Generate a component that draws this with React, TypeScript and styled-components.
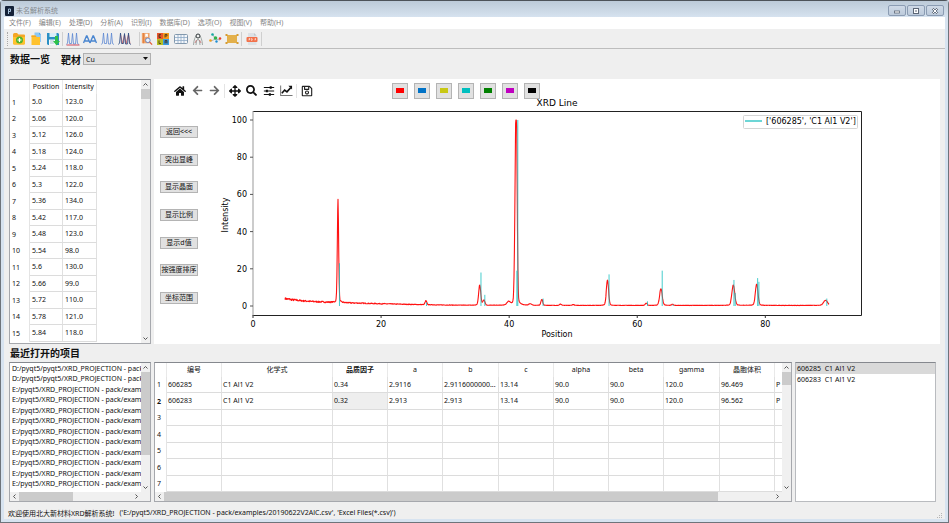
import React from 'react';
import styled, { createGlobalStyle, css } from 'styled-components';
import { FaHome, FaArrowLeft, FaArrowRight, FaArrowsAlt, FaSearch, FaRegSave } from 'react-icons/fa';

const UI_FONT = '"Noto Sans", "Noto Sans CJK SC", sans-serif';
const PLOT_FONT = '"DejaVu Sans", sans-serif';

const GlobalStyle = createGlobalStyle`
  *, *::before, *::after { box-sizing: border-box; }
  body { margin: 0; background: #d7e3f0; font-family: ${UI_FONT}; font-size: 7px; color: #111; }
  button, select { font: inherit; color: inherit; padding: 0; }
  ul { list-style: none; margin: 0; padding: 0; }
`;

const Window = styled.div`
  display: flex;
  flex-direction: column;
  min-height: 100vh;
  padding: 0 3px 3px;
  border: 1px solid #6e747b;
  border-top-color: #4d5359;
  border-radius: 4px 4px 0 0;
  background: #d7e3f0;
`;

const TitleBar = styled.header`
  display: flex;
  align-items: center;
  gap: 2px;
  height: 16px;
  margin: 0 -3px;
  padding: 3px 4px 0;
  background: linear-gradient(#bccad8, #d6e2ef);
  color: #868b90;
`;

const AppTitle = styled.h1`
  flex: 1;
  margin: 0;
  font-size: 7px;
  line-height: 10px;
  font-weight: 400;
`;

const WindowButton = styled.button`
  display: grid;
  place-items: center;
  width: 18px;
  height: 11px;
  border: 1px solid #8b9cb3;
  border-radius: 2px;
  background: linear-gradient(#cfdae7, #bccadb);
`;

const WindowButtons = styled.div`
  display: flex;
  gap: 1px;
`;

const MenuBar = styled.nav`
  display: flex;
  gap: 8px;
  height: 12px;
  padding: 0 5px;
  background: #fff;
`;

const MenuItem = styled.button`
  border: 0;
  background: none;
  color: #858585;
  line-height: 12px;
  white-space: nowrap;
`;

const Client = styled.div`
  flex: 1;
  display: flex;
  flex-direction: column;
  background: #efefef;
`;

const ToolBar = styled.div`
  display: flex;
  align-items: center;
  height: 20px;
  padding-left: 3px;
  border-bottom: 1px solid #bdbdbd;
`;

const Grip = styled.span`
  width: 2px;
  height: 14px;
  margin-right: 1px;
  border-left: 1px dotted #a9a9a9;
`;

const ToolGroup = styled.div`
  display: flex;
  padding-right: 5px;
`;

const ToolButton = styled.button<{ $w?: number }>`
  display: grid;
  place-items: center;
  width: ${p => p.$w ?? 17}px;
  height: 16px;
  border: 0;
  background: none;
  svg { display: block; }
`;

const Separator = styled.span<{ $light?: boolean }>`
  width: 1px;
  height: 14px;
  margin: 0 1px;
  background: ${p => (p.$light ? '#e4e4e4' : '#cfcfcf')};
`;

const HeadingRow = styled.div`
  display: flex;
  align-items: center;
  height: 30px;
  padding: 0 6px 10px;
`;

const Heading = styled.h2`
  margin: 0;
  font-size: 10px;
  line-height: 17px;
  font-weight: 700;
  color: #111;
`;

const TargetLabel = styled.label`
  margin-left: 11px;
  font-size: 10px;
  font-weight: 700;
`;

const SelectBox = styled.span`
  display: flex;
  position: relative;
  width: 68px;
  height: 12px;
  margin-left: 2px;
  svg { position: absolute; right: 3px; top: 4px; pointer-events: none; }
`;

const Select = styled.select`
  appearance: none;
  width: 100%;
  padding-left: 2px;
  border: 1px solid #b0b0b0;
  border-radius: 0;
  background: #e1e1e1;
`;

const Upper = styled.main`
  flex: 1;
  display: grid;
  grid-template-columns: 142px 1fr;
  gap: 3px;
  padding: 0 5px;
`;

const Lower = styled.section`
  display: grid;
  grid-template-columns: 142px 1fr 141px;
  gap: 3px;
  height: 140px;
  padding: 0 9px 0 5px;
`;

const Panel = styled.div`
  display: grid;
  grid-template-columns: minmax(0, 1fr) 9px;
  grid-template-rows: minmax(0, 1fr) auto;
  min-width: 0;
  min-height: 0;
  border: 1px solid #a6a8ad;
  border-top-color: #85888e;
  background: #fff;
`;

const Clip = styled.div`
  overflow: hidden;
`;

const Track = styled.div<{ $horizontal?: boolean }>`
  display: flex;
  flex-direction: ${p => (p.$horizontal ? 'row' : 'column')};
  background: #f0f0f0;
  ${p => (p.$horizontal ? css`height: 9px;` : css`width: 9px;`)}
`;

const Arrow = styled.button<{ $turn: number }>`
  display: grid;
  place-items: center;
  flex: none;
  width: 9px;
  height: 9px;
  border: 0;
  background: none;
  svg { transform: rotate(${p => p.$turn}deg); }
`;

const TrackBody = styled.div<{ $horizontal?: boolean }>`
  flex: 1;
  display: flex;
  flex-direction: ${p => (p.$horizontal ? 'row' : 'column')};
`;

const Thumb = styled.span<{ $share: number }>`
  flex: 0 0 ${p => p.$share}%;
  background: #cbcbcb;
`;

const Corner = styled.span`
  background: #f0f0f0;
`;

const Grid = styled.table`
  table-layout: fixed;
  border-collapse: separate;
  border-spacing: 0;
  th, td {
    height: 16px;
    padding: 0 0 0 2px;
    overflow: hidden;
    border-right: 1px solid #e0e0e0;
    line-height: 10px;
    font-weight: 400;
    text-align: left;
    white-space: nowrap;
    text-overflow: ellipsis;
  }
  td { padding-left: 1px; border-bottom: 1px solid #dcdcdc; }
  thead th { height: 14px; padding: 0; text-align: center; border-right-color: #e9e9e9; }
  tbody th { border-right-color: #e4e4e4; }
`;

const DataGrid = styled(Grid)`
  width: 87px;
  td { padding-left: 2px; }
  tbody tr:nth-child(odd) > * { height: 17px; }
`;

const ResultGrid = styled(Grid)`
  width: 676px;
  tbody tr:nth-child(even) > * { height: 17px; }
`;

const HeadCell = styled.th<{ $strong?: boolean }>`
  && { font-weight: ${p => (p.$strong ? 700 : 400)}; }
`;

const Cell = styled.td<{ $selected?: boolean }>`
  background: ${p => (p.$selected ? '#eeeeee' : 'transparent')};
`;

const FileList = styled.ul`
  padding: 1px 0 0 2px;
  li { height: 10px; line-height: 10px; white-space: nowrap; }
  li:nth-child(even) { height: 11px; }
`;

const MatchList = styled.ul`
  border: 1px solid #b9bbbf;
  border-top-color: #85888e;
  background: #fff;
`;

const MatchItem = styled.li<{ $selected?: boolean }>`
  height: 11px;
  padding-left: 1px;
  line-height: 11px;
  white-space: pre;
  background: ${p => (p.$selected ? '#d9d9d9' : 'transparent')};
`;

const PlotPanel = styled.section`
  display: grid;
  grid-template-columns: 60px minmax(0, 1fr);
  grid-template-rows: 19px 1fr;
  background: #fff;
`;

const PlotTools = styled.div`
  grid-column: 1 / -1;
  display: flex;
  align-items: center;
  padding: 4px 0 0 17px;
  svg { display: block; }
`;

const Swatches = styled.div`
  display: flex;
  gap: 6px;
  margin-left: 77px;
`;

const Swatch = styled.button<{ $color: string }>`
  width: 16px;
  height: 16px;
  padding: 4px 3px;
  border: 1px solid #b4b4b4;
  background: #e1e1e1;
  &::before { content: ''; display: block; height: 5px; background: ${p => p.$color}; }
`;

const SideButtons = styled.div`
  display: flex;
  flex-direction: column;
  justify-content: space-between;
  align-items: flex-start;
  max-height: 206px;
  padding: 28px 0 0 6px;
`;

const SideButton = styled.button`
  width: 38px;
  height: 12px;
  border: 1px solid #b4b4b4;
  background: #e1e1e1;
  line-height: 10px;
  white-space: nowrap;
`;

const Chart = styled.svg`
  display: block;
  width: 100%;
  height: auto;
  font-family: ${PLOT_FONT};
`;

const SectionTitle = styled.div`
  padding: 1px 6px 0;
  height: 18px;
`;

const StatusBar = styled.footer`
  display: flex;
  align-items: center;
  gap: 5px;
  height: 17px;
  padding: 4px 2px 0 4px;
  white-space: nowrap;
  svg { margin-left: auto; align-self: flex-end; }
`;

const Chevron = () => (
  <svg width="5" height="5" viewBox="0 0 5 5"><path d="M0.5 3.5 2.5 1.5 4.5 3.5" fill="none" stroke="#555" /></svg>
);

function VScroll({ share }: { share: number }) {
  return (
    <Track>
      <Arrow $turn={0} aria-label="Scroll up"><Chevron /></Arrow>
      <TrackBody><Thumb $share={share} /></TrackBody>
      <Arrow $turn={180} aria-label="Scroll down"><Chevron /></Arrow>
    </Track>
  );
}

function HScroll({ share }: { share: number }) {
  return (
    <Track $horizontal>
      <Arrow $turn={-90} aria-label="Scroll left"><Chevron /></Arrow>
      <TrackBody $horizontal><Thumb $share={share} /></TrackBody>
      <Arrow $turn={90} aria-label="Scroll right"><Chevron /></Arrow>
    </Track>
  );
}

const Icon = ({ children, size = 14 }: { children: React.ReactNode; size?: number }) => (
  <svg width={size} height={size} viewBox="0 0 14 14" fill="none">{children}</svg>
);

const FolderAdd = () => (
  <Icon>
    <path d="M1 2.5Q1 1 2.5 1H5l1.5 1.5H12q1 0 1 1V11q0 1.5-1.5 1.5h-9Q1 12.5 1 11z" fill="#f5a623" />
    <path d="M1 5h12v6q0 1.5-1.5 1.5h-9Q1 12.5 1 11z" fill="#ffc22e" />
    <circle cx="7.5" cy="8" r="3.5" fill="#52b52c" />
    <path d="M7.5 6v4M5.5 8h4" stroke="#fff" strokeWidth="1.2" />
  </Icon>
);
const FolderDoc = () => (
  <Icon>
    <path d="M5.5.5h4.500l2 2V10H5.500z" fill="#8cc8f5" />
    <path d="M10 .5v2h2z" fill="#4a9fe0" />
    <path d="M2.500 3.500h4L7.500 5H11v8H2.500z" fill="#ffc22e" />
    <path d="M2.500 3.500h4L7.500 5h-5z" fill="#f5a623" />
  </Icon>
);
const SaveAs = () => (
  <Icon>
    <path d="M1 1h11l1 1v11H2l-1-1z" fill="#2a8fc4" />
    <path d="M3.5 1h7v4h-7z" fill="#d9eef8" />
    <path d="M3 7.5h8V13H3z" fill="#f4fafc" />
    <path d="M4 9h4M4 11h4" stroke="#9bb9c6" strokeWidth=".8" />
    <path d="M9 4h3v5h2l-3.5 4.5L7 9h2z" fill="#2fc14a" />
  </Icon>
);
const Peaks = ({ base, second, color = '#5b86d2' }: { base?: string; second?: string; color?: string }) => (
  <Icon>
    {second && <path d="M2.500 2 4.500 12 6.500 2.500 8 12l2.500-9.500L12 12" stroke={second} strokeWidth=".7" />}
    <path d="M.5 12.500 1.500 11 2.500 1l1 10.500h2L6.500 1.500l1 10.500h2L10.500 1l1 10.500 1.500 1" stroke={color} strokeWidth=".8" />
    {base && <path d="M.5 13h13" stroke={base} strokeWidth="1" />}
  </Icon>
);
const DoubleA = () => (
  <Icon>
    <path d="M.5 11 3.500 4h.5L7 11M2 9h4M7 11l3-7h.5l3 7M8.500 9h4" stroke="#4a86d0" strokeWidth="1.400" />
  </Icon>
);
const BookSearch = () => (
  <Icon size={12}>
    <path d="M1 0h9v12H1z" fill="#f0a368" />
    <path d="M3 0v12" stroke="#e27b3c" />
    <path d="M5 1h3v4L6.500 4 5 5z" fill="#fff" />
    <circle cx="8" cy="8.500" r="2.700" fill="#e8f1fb" stroke="#5e7fc0" />
    <path d="m10 10.500 3 3" stroke="#e45b3a" strokeWidth="1.400" />
  </Icon>
);
const Elements = () => (
  <Icon>
    <path d="M1 1h6v6H1z" fill="#e8552d" /><path d="M7 1h6v6H7z" fill="#f39a1f" />
    <path d="M1 7h6v6H1z" fill="#b5bf24" /><path d="M7 7h6v6H7z" fill="#3b9be0" />
    <path d="M3 2.5v3h2M3 2.5h2M3 4h1.5M9 5.5v-3h2v1.5H9M3 8.5v3h2M9 11.5v-3h2v3M9 10h2" stroke="#42321c" strokeWidth=".8" />
  </Icon>
);
const TableIcon = () => (
  <Icon>
    <rect x=".5" y="2.500" width="13" height="9" rx="1" fill="#f5f7fa" stroke="#8298ad" />
    <path d="M1 5.500h12M1 8.500h12M4 3v8M7 3v8M10 3v8" stroke="#8ea9c6" strokeWidth=".8" />
  </Icon>
);
const Atom = () => (
  <Icon>
    <path d="M2.500 13q.5-8 4-10.500M11.500 13q-.5-8-4-10.500M5 13q0-5 2-6 2 1 2 6" stroke="#8b9692" strokeWidth=".8" />
    <circle cx="7" cy="4" r="2" stroke="#30383a" fill="#f1f1f1" />
    <path d="M5.500 8 4 11M8.500 8l1.500 3" stroke="#c26f6f" strokeWidth=".8" />
  </Icon>
);
const Molecule = () => (
  <Icon>
    <path d="m5 3 2.500 4L3 9M7.500 7l4.500 1" stroke="#aab2bb" />
    <circle cx="4.500" cy="2.500" r="1.300" fill="#13a8a0" /><circle cx="7.500" cy="6" r="1.800" fill="#32b34a" />
    <circle cx="12" cy="6.500" r="1.300" fill="#e8402c" /><circle cx="2.500" cy="8.500" r="1.300" fill="#f0a01c" />
    <circle cx="8.500" cy="9.500" r="1.200" fill="#1f8ed2" />
  </Icon>
);
const Ratio = () => (
  <Icon>
    <path d="M2 3h10v8H2z" fill="#e3b04b" />
    <path d="M.5 2h2v2h-2zM11.500 2h2v2h-2zM.5 10h2v2h-2zM11.500 10h2v2h-2z" fill="#d69c33" />
  </Icon>
);
const PdfIcon = () => (
  <Icon>
    <path d="M3 1h6l2.500 2.500V13H3z" fill="#dde1e5" /><path d="M9 1v2.500h2.500z" fill="#bfc6cc" />
    <rect x="1.500" y="5" width="11" height="5" rx="1" fill="#f2714a" />
    <path d="M4 8.500V6.500h1v1H4M6.500 6.500h.5l.5 1-.5 1h-.5zM10 8.500v-2h1M10 7.500h1" stroke="#fff" strokeWidth=".5" />
  </Icon>
);
const Sliders = () => (
  <Icon size={12}>
    <path d="M1 3h12M1 7h12M1 11h12" stroke="#111" strokeWidth="1.200" />
    <path d="M9 1.500v3M4.500 5.500v3M8 9.500v3" stroke="#111" strokeWidth="2.400" />
  </Icon>
);
const LineChart = () => (
  <Icon size={13}>
    <path d="M.7 1.500v11h12.800" stroke="#777" strokeWidth="1.100" />
    <path d="m2 10 3-3.500 2.500 2 4-4.500" stroke="#111" strokeWidth="1.800" />
    <path d="M9 2h4v4z" fill="#111" />
  </Icon>
);

const sx = (v: number) => 39 + v * 6.404;
const sy = (v: number) => 208 - v * 1.86;

const PEAKS: [number, number, number][] = [
  [13.27, 56, 0.1], [27, 2.2, 0.13], [35.4, 11, 0.16], [36.05, 2.8, 0.16], [39.9, 1.8, 0.25],
  [41.02, 70, 0.14], [41.15, 60, 0.12], [43.3, 0.8, 0.2], [45.1, 3.2, 0.14], [48, 0.7, 0.15], [50, 0.5, 0.15],
  [55.35, 13.6, 0.17], [61.4, 1.2, 0.15], [63.7, 9, 0.2], [65.5, 0.6, 0.15], [75, 11, 0.22], [78.65, 11.5, 0.2],
  [89.4, 2.8, 0.3],
];

const REFERENCE: [number, number][] = [
  [13.5, 23], [27.1, 2], [35.6, 18], [36.2, 6], [41.2, 19], [41.35, 100], [45.3, 4], [55.6, 17],
  [61.6, 2.5], [63.9, 19], [65.6, 0.8], [75.1, 14], [75.3, 7], [78.8, 15], [79, 13], [89.6, 4],
];

function tracePath() {
  let seed = 7;
  const points: string[] = [];
  for (let x = 5; x <= 90; x += 0.06) {
    seed = (seed * 16807) % 2147483647;
    const noise = seed / 2147483647 - 0.5;
    const level = 0.3 + 2.1 * Math.exp(-(x - 5) / 3.5) + 1.6 * Math.exp(-Math.pow(x / 24, 3));
    let y = level + noise * (0.15 + 0.6 * Math.max(0, level - 0.3) / 2);
    for (const [c, h, w] of PEAKS) {
      const d = (x - c) / w;
      y += h * (0.95 * Math.exp((-d * d) / 2) + 0.05 / (1 + (d * d) / 6));
    }
    points.push(`${sx(x).toFixed(1)} ${sy(Math.min(100, y)).toFixed(1)}`);
  }
  return 'M' + points.join('L');
}

const TRACE = tracePath();

function XrdChart() {
  return (
    <Chart viewBox="0 0 726 246" role="img" aria-label="XRD Line">
      <text x="343" y="8" fontSize="9" textAnchor="middle">XRD Line</text>
      <path d={TRACE} fill="none" stroke="#f11" strokeWidth="1.100" strokeLinejoin="round" />
      {REFERENCE.map(([x, h]) => (
        <path key={x} d={`M${sx(x)} 208V${sy(h)}`} stroke="#16bfbf" strokeWidth="0.800" />
      ))}
      <path d="M39 13.5H647.5V217.5H39" fill="none" stroke="#222" />
      <path d="M39 13V218" stroke="#999" />
      {[0, 20, 40, 60, 80].map(v => (
        <g key={v}>
          <path d={`M${sx(v)} 217v3`} stroke="#333" />
          <text x={sx(v)} y="229" fontSize="8" textAnchor="middle">{v}</text>
        </g>
      ))}
      {[0, 20, 40, 60, 80, 100].map(v => (
        <g key={v}>
          <path d={`M36 ${sy(v)}h3`} stroke="#555" />
          <text x="33" y={sy(v) + 3} fontSize="8" textAnchor="end">{v}</text>
        </g>
      ))}
      <text x="343" y="239" fontSize="8" textAnchor="middle">Position</text>
      <text transform="translate(14 117) rotate(-90)" fontSize="8" textAnchor="middle">Intensity</text>
      <rect x="529.500" y="17.500" width="114" height="13" rx="1" fill="#fff" stroke="#d5d5d5" />
      <path d="M531 23h17" stroke="#3cc8c8" strokeWidth="1.500" />
      <text x="552" y="26" fontSize="8">['606285', 'C1 Al1 V2']</text>
    </Chart>
  );
}

const MENUS = ['文件(F)', '编辑(E)', '处理(D)', '分析(A)', '识别(I)', '数据库(D)', '选项(O)', '视图(V)', '帮助(H)'];

const DATA: [string, string][] = [
  ['5.0', '123.0'], ['5.06', '120.0'], ['5.12', '126.0'], ['5.18', '124.0'], ['5.24', '118.0'],
  ['5.3', '122.0'], ['5.36', '134.0'], ['5.42', '117.0'], ['5.48', '123.0'], ['5.54', '98.0'],
  ['5.6', '130.0'], ['5.66', '99.0'], ['5.72', '110.0'], ['5.78', '121.0'], ['5.84', '118.0'],
];

const SIDE = ['返回<<<', '突出显峰', '显示晶面', '显示比例', '显示d值', '按强度排序', '坐标范围'];

const COLORS: [string, string][] = [
  ['Red', '#ff0000'], ['Blue', '#0072c6'], ['Yellow', '#c8c814'], ['Cyan', '#00bfbf'],
  ['Green', '#008000'], ['Magenta', '#bf00bf'], ['Black', '#000000'],
];

const FILES = [
  ...Array(2).fill('D:/pyqt5/pyqt5/XRD_PROJECTION - pack'),
  ...Array(10).fill('E:/pyqt5/XRD_PROJECTION - pack/exam'),
];

const COLUMNS: [string, number][] = [
  ['编号', 55], ['化学式', 111], ['品质因子', 55], ['a', 55], ['b', 56], ['c', 55],
  ['alpha', 55], ['beta', 55], ['gamma', 56], ['晶胞体积', 55], ['', 56],
];

const RESULTS = [
  ['606285', 'C1 Al1 V2', '0.34', '2.9116', '2.9116000000...', '13.14', '90.0', '90.0', '120.0', '96.469', 'P'],
  ['606283', 'C1 Al1 V2', '0.32', '2.913', '2.913', '13.14', '90.0', '90.0', '120.0', '96.562', 'P'],
];

export default function App() {
  return (
    <>
      <GlobalStyle />
      <Window>
        <TitleBar>
          <svg width="9" height="10" viewBox="0 0 9 10"><rect width="9" height="10" rx="1" fill="#152238" /><path d="M3.5 8V3h2v2.5h-2" fill="none" stroke="#a9c3dc" /></svg>
          <AppTitle>未名解析系统</AppTitle>
          <WindowButtons>
            <WindowButton aria-label="Minimize"><svg width="8" height="6" viewBox="0 0 8 6"><rect x="1.5" y="3" width="5" height="2" fill="#fff" stroke="#5c6676" strokeWidth=".8" /></svg></WindowButton>
            <WindowButton aria-label="Maximize"><svg width="8" height="6" viewBox="0 0 8 6"><rect x="1.5" y=".5" width="5" height="5" fill="#fff" stroke="#5c6676" /><path d="M3 3h2" stroke="#5c6676" /></svg></WindowButton>
            <WindowButton aria-label="Close"><svg width="8" height="6" viewBox="0 0 8 6"><path d="m1.5.5 5 5m0-5-5 5" stroke="#5c6676" strokeWidth="2" /><path d="m1.5.5 5 5m0-5-5 5" stroke="#fff" /></svg></WindowButton>
          </WindowButtons>
        </TitleBar>
        <MenuBar>{MENUS.map(m => <MenuItem key={m}>{m}</MenuItem>)}</MenuBar>
        <Client>
          <ToolBar>
            <Grip />
            <ToolButton aria-label="Open"><FolderAdd /></ToolButton>
            <ToolButton aria-label="Import"><FolderDoc /></ToolButton>
            <ToolButton aria-label="Save"><SaveAs /></ToolButton>
            <Separator />
            <ToolGroup>
              <ToolButton aria-label="Background"><Peaks base="#d44a5a" /></ToolButton>
              <ToolButton $w={18} aria-label="Smooth"><DoubleA /></ToolButton>
              <ToolButton aria-label="Peaks"><Peaks /></ToolButton>
              <ToolButton aria-label="Compare"><Peaks second="#c0464c" color="#2c4d84" /></ToolButton>
            </ToolGroup>
            <Separator />
            <ToolButton $w={12} aria-label="Search"><BookSearch /></ToolButton>
            <ToolButton $w={19} aria-label="Elements"><Elements /></ToolButton>
            <ToolButton aria-label="Table"><TableIcon /></ToolButton>
            <ToolButton aria-label="Atom"><Atom /></ToolButton>
            <ToolButton aria-label="Structure"><Molecule /></ToolButton>
            <ToolButton aria-label="Ratio"><Ratio /></ToolButton>
            <Separator />
            <ToolButton aria-label="PDF"><PdfIcon /></ToolButton>
            <Separator />
          </ToolBar>
          <HeadingRow>
            <Heading>数据一览</Heading>
            <TargetLabel htmlFor="target">靶材</TargetLabel>
            <SelectBox>
              <Select id="target" defaultValue="Cu"><option>Cu</option></Select>
              <svg width="5" height="4" viewBox="0 0 5 4"><path d="M0 0h5L2.5 3z" fill="#111" /></svg>
            </SelectBox>
          </HeadingRow>
          <Upper>
            <Panel>
              <Clip>
                <DataGrid>
                  <colgroup><col width="20" /><col width="33" /><col width="34" /></colgroup>
                  <thead><tr><HeadCell /><HeadCell>Position</HeadCell><HeadCell>Intensity</HeadCell></tr></thead>
                  <tbody>
                    {DATA.map(([p, i], n) => (
                      <tr key={p}><HeadCell>{n + 1}</HeadCell><Cell>{p}</Cell><Cell>{i}</Cell></tr>
                    ))}
                  </tbody>
                </DataGrid>
              </Clip>
              <VScroll share={4} />
            </Panel>
            <PlotPanel>
              <PlotTools>
                <ToolButton $w={18} aria-label="Home"><FaHome size={12} color="#111" /></ToolButton>
                <ToolButton aria-label="Back"><FaArrowLeft size={11} color="#666" /></ToolButton>
                <ToolButton aria-label="Forward"><FaArrowRight size={11} color="#666" /></ToolButton>
                <Separator $light />
                <ToolButton aria-label="Pan"><FaArrowsAlt size={12} color="#111" /></ToolButton>
                <ToolButton aria-label="Zoom"><FaSearch size={11} color="#111" /></ToolButton>
                <ToolButton $w={18} aria-label="Subplots"><Sliders /></ToolButton>
                <ToolButton aria-label="Axes"><LineChart /></ToolButton>
                <Separator $light />
                <ToolButton aria-label="Save figure"><FaRegSave size={12} color="#222" /></ToolButton>
                <Swatches>{COLORS.map(([n, c]) => <Swatch key={n} $color={c} aria-label={n} />)}</Swatches>
              </PlotTools>
              <SideButtons>{SIDE.map(s => <SideButton key={s}>{s}</SideButton>)}</SideButtons>
              <XrdChart />
            </PlotPanel>
          </Upper>
          <SectionTitle><Heading>最近打开的项目</Heading></SectionTitle>
          <Lower>
            <Panel>
              <Clip><FileList>{FILES.map((f, n) => <li key={n}>{f}</li>)}</FileList></Clip>
              <VScroll share={75} />
              <HScroll share={48} />
              <Corner />
            </Panel>
            <Panel>
              <Clip>
                <ResultGrid>
                  <colgroup><col width="12" />{COLUMNS.map(([c, w]) => <col key={c} width={w} />)}</colgroup>
                  <thead>
                    <tr><HeadCell />{COLUMNS.map(([c], n) => <HeadCell key={c} $strong={n === 2}>{c}</HeadCell>)}</tr>
                  </thead>
                  <tbody>
                    {[0, 1, 2, 3, 4, 5, 6].map(r => (
                      <tr key={r}>
                        <HeadCell $strong={r === 1}>{r + 1}</HeadCell>
                        {COLUMNS.map(([c], n) => <Cell key={c} $selected={r === 1 && n === 2}>{RESULTS[r]?.[n]}</Cell>)}
                      </tr>
                    ))}
                  </tbody>
                </ResultGrid>
              </Clip>
              <VScroll share={12} />
              <HScroll share={91} />
              <Corner />
            </Panel>
            <MatchList>
              <MatchItem $selected>606285  C1 Al1 V2</MatchItem>
              <MatchItem>606283  C1 Al1 V2</MatchItem>
            </MatchList>
          </Lower>
          <StatusBar>
            <span>欢迎使用北大新材料XRD解析系统!</span>
            <span>('E:/pyqt5/XRD_PROJECTION - pack/examples/20190622V2AlC.csv', 'Excel Files(*.csv)')</span>
            <svg width="6" height="6" viewBox="0 0 6 6"><path d="M4 0h1v1h-1zM4 2h1v1h-1zM4 4h1v1h-1zM2 2h1v1h-1zM2 4h1v1h-1zM0 4h1v1h-1z" fill="#b5b5b5" /></svg>
          </StatusBar>
        </Client>
      </Window>
    </>
  );
}
